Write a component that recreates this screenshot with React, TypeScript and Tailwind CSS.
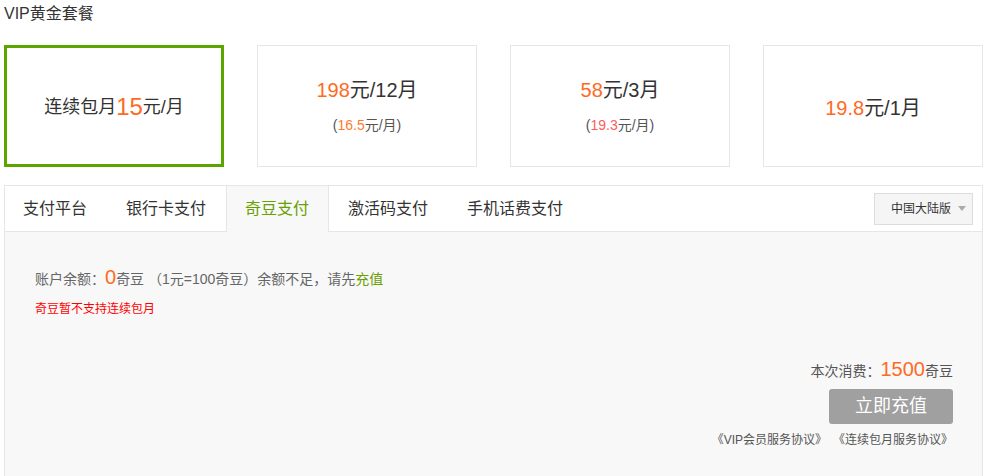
import React, { useState } from 'react';

const FONT = { fontFamily: '"Liberation Sans", "Noto Sans CJK SC", sans-serif' };

const tabs = ['支付平台', '银行卡支付', '奇豆支付', '激活码支付', '手机话费支付'];

export default function App() {
    const [activeTab, setActiveTab] = useState(2);

    return (
        <div className="w-[985px] bg-white text-[#333]" style={FONT}>
            <div className="pl-[4px] pt-[4px] text-[16px] leading-[20px]">VIP黄金套餐</div>

            {/* Plan cards */}
            <div className="flex gap-[33px] pl-[4px] pt-[21px]">
                <div className="flex h-[122px] w-[220px] items-center justify-center border-[3px] border-[#5aa500] pt-[2px]">
                    <span className="text-[18px] leading-none">连续包月</span>
                    <span className="text-[24px] leading-none text-[#ff6a22]">15</span>
                    <span className="text-[18px] leading-none">元/月</span>
                </div>
                <div className="flex h-[122px] w-[220px] flex-col items-center justify-center border border-[#e6e6e6]">
                    <div className="text-[20px] leading-none">
                        <span className="text-[#ff6a22]">198</span>元/12月
                    </div>
                    <div className="mt-[18px] text-[14px] leading-none text-[#555]">
                        (<span className="text-[#ff7a2e]">16.5</span>元/月)
                    </div>
                </div>
                <div className="flex h-[122px] w-[220px] flex-col items-center justify-center border border-[#e6e6e6]">
                    <div className="text-[20px] leading-none">
                        <span className="text-[#ff6a22]">58</span>元/3月
                    </div>
                    <div className="mt-[18px] text-[14px] leading-none text-[#555]">
                        (<span className="text-[#ff5a5a]">19.3</span>元/月)
                    </div>
                </div>
                <div className="flex h-[122px] w-[220px] items-center justify-center border border-[#e6e6e6] pt-[3px]">
                    <div className="text-[20px] leading-none">
                        <span className="text-[#ff6a22]">19.8</span>元/1月
                    </div>
                </div>
            </div>

            {/* Payment panel */}
            <div className="ml-[4px] mt-[18px] w-[979px] border border-[#e6e6e6]">
                <div className="flex h-[46px] items-stretch border-b border-[#e6e6e6] bg-white">
                    {tabs.map((t, i) => (
                        <button
                            key={t}
                            onClick={() => setActiveTab(i)}
                            className={`relative flex items-center text-[16px] ${i === 0 ? 'pl-[17px] pr-[19px]' : 'pl-[18px] pr-[19px]'} ${
                                i === activeTab
                                    ? '-mb-px border-x border-[#e6e6e6] bg-[#f8f8f8] text-[#699f00]'
                                    : 'border-x border-transparent text-[#333]'
                            }`}
                        >
                            {t}
                        </button>
                    ))}
                    <div className="ml-auto flex items-center pr-[9px]">
                        <div className="flex h-[32px] w-[99px] items-center justify-end gap-[7px] border border-[#dcdcdc] bg-[#f5f5f5] pr-[6px] text-[12px] text-[#333]">
                            中国大陆版
                            <span className="h-0 w-0 border-x-[4px] border-t-[5px] border-x-transparent border-t-[#aaa]" />
                        </div>
                    </div>
                </div>

                <div className="h-[244px] bg-[#f8f8f8] pl-[30px] pr-[29px]">
                    <div className="flex items-baseline pt-[35px] text-[14px] text-[#666]">
                        账户余额：<span className="text-[20px] leading-none text-[#ff6a22]">0</span>奇豆 （1元=100奇豆）余额不足，请先
                        <span className="text-[#699f00]">充值</span>
                    </div>
                    <div className="mt-[13px] text-[12px] leading-none text-[#ff0000]">奇豆暂不支持连续包月</div>

                    <div className="flex flex-col items-end pt-[44px]">
                        <div className="flex items-baseline text-[14px] text-[#555]">
                            本次消费：<span className="text-[20px] leading-none text-[#ff6a22]">1500</span>奇豆
                        </div>
                        <button className="mt-[7px] h-[35px] w-[124px] rounded-[3px] bg-[#a0a0a0] text-[18px] text-white">
                            立即充值
                        </button>
                        <div className="mt-[7px] flex gap-[6px] text-[12px] text-[#555]">
                            <span>《VIP会员服务协议》</span>
                            <span>《连续包月服务协议》</span>
                        </div>
                    </div>
                </div>
            </div>
        </div>
    );
}
